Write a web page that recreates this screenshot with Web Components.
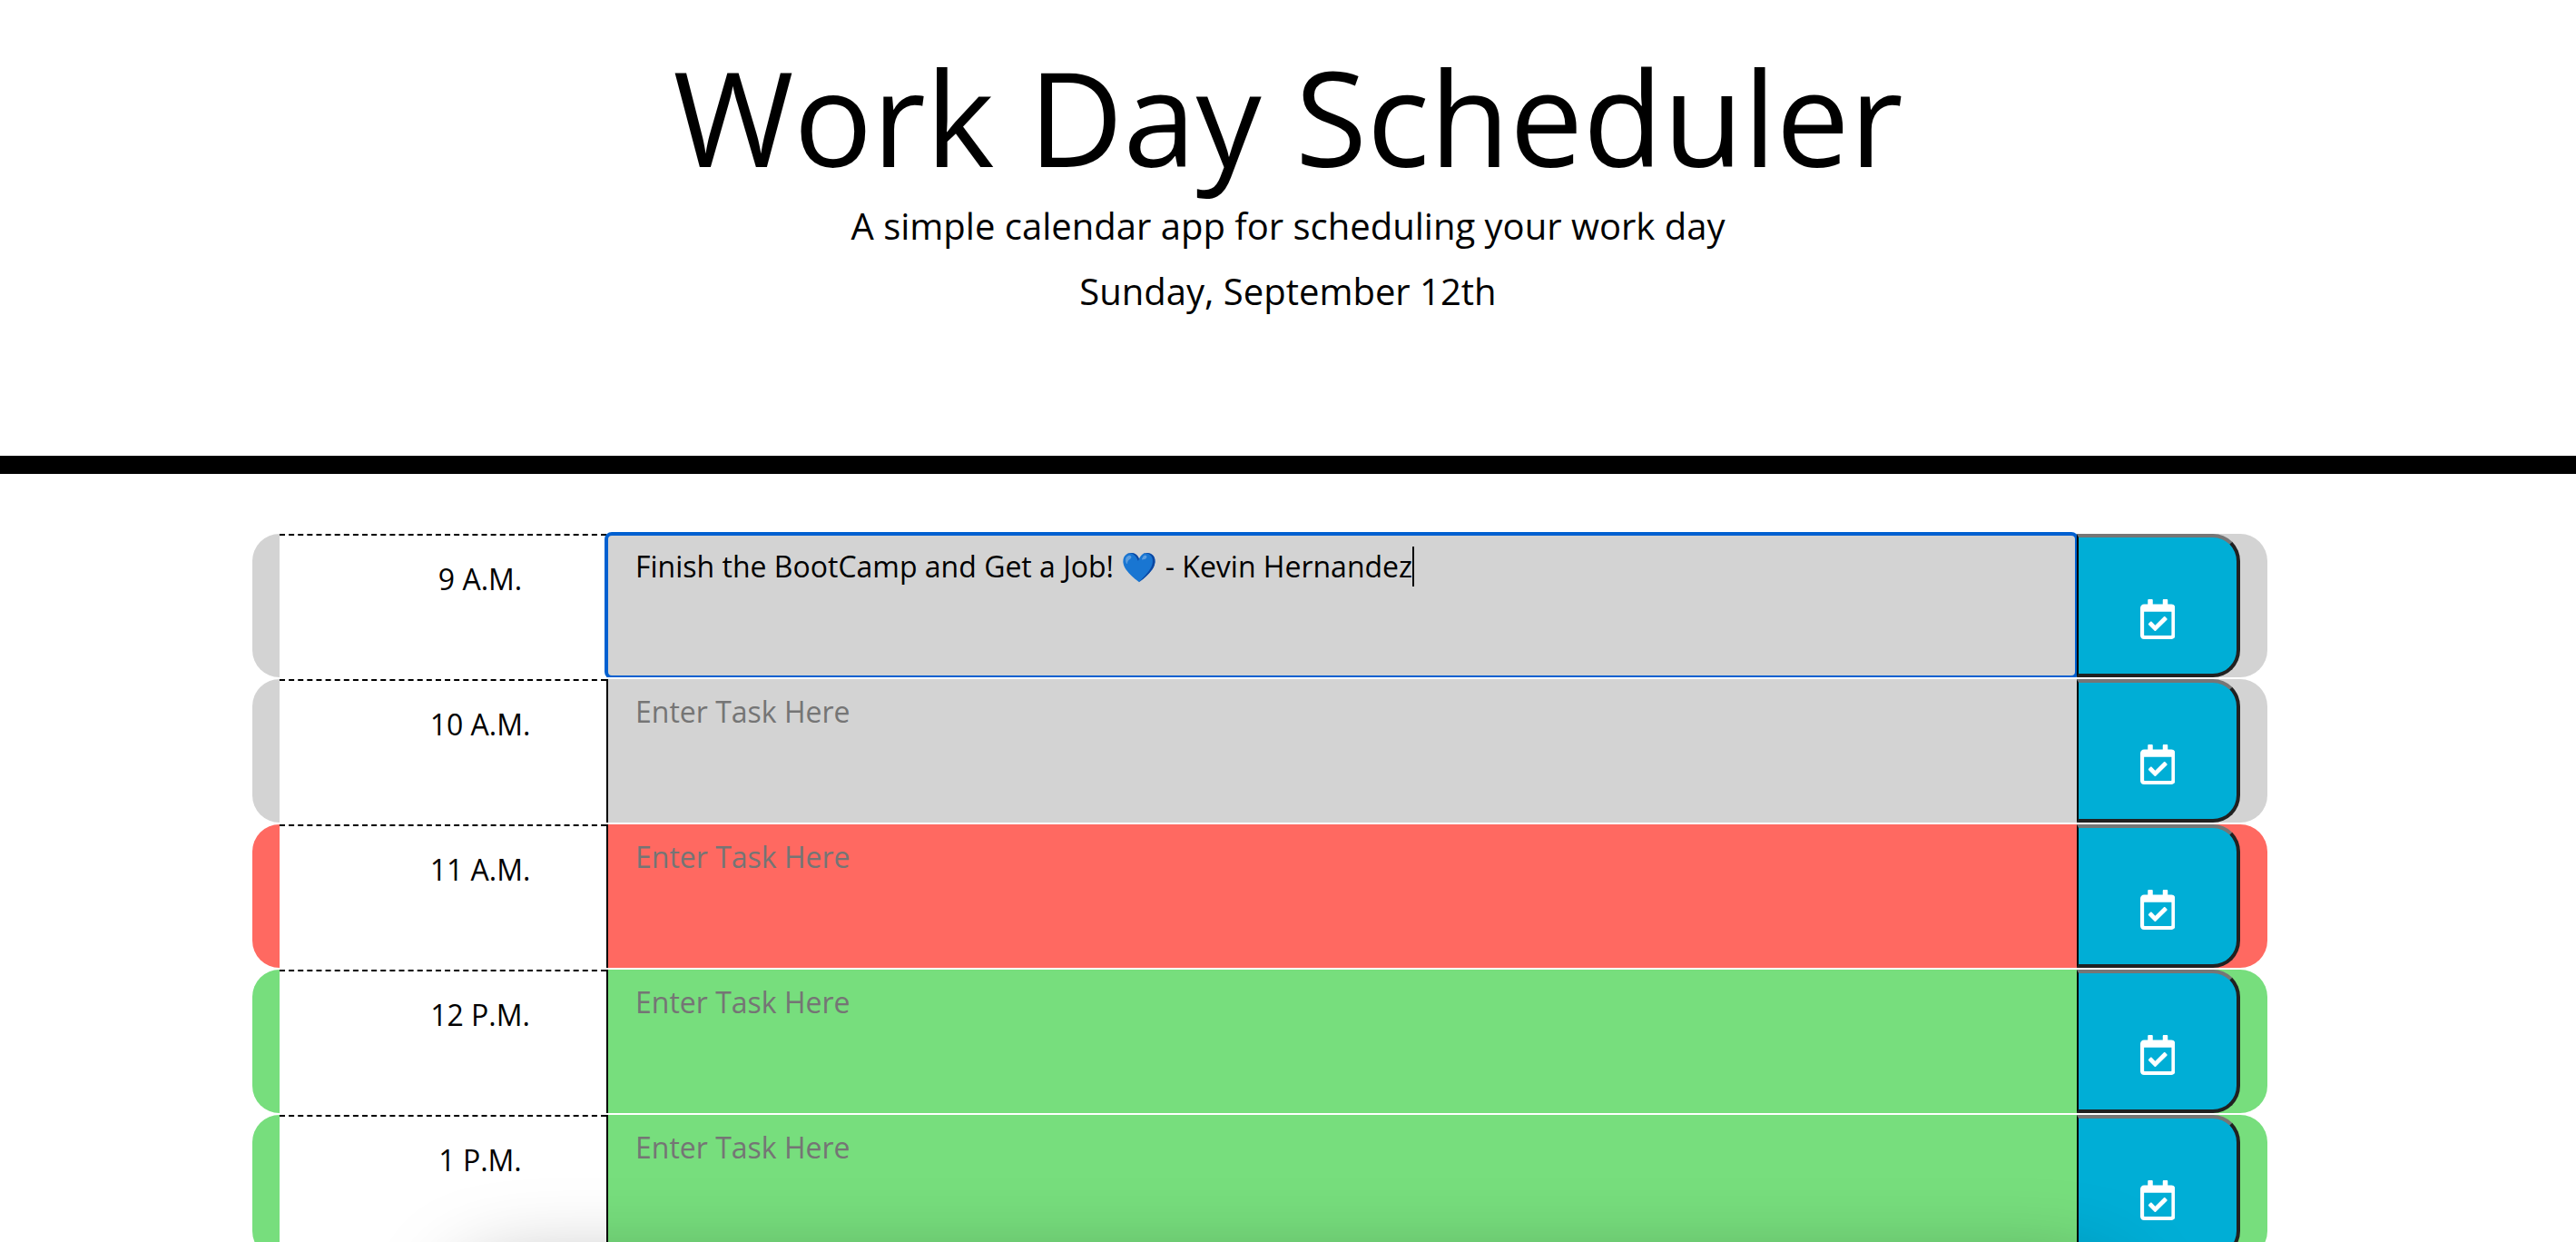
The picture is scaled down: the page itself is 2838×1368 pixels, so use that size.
<!DOCTYPE html>
<html lang="en">
<head>
<meta charset="utf-8">
<title>Work Day Scheduler</title>
<style>
  html, body { height: 100%; margin: 0; overflow: hidden; }
  body { background: #fff; color: #000; font: 32px/48px "Open Sans", sans-serif; }
</style>
</head>
<body>
<day-scheduler>
  <scheduler-header slot="header">
    <span slot="title">Work Day Scheduler</span>
    <span slot="lead">A simple calendar app for scheduling your work day</span>
    <span slot="date">Sunday, September 12th</span>
  </scheduler-header>
  <time-block state="past" editing value="Finish the BootCamp and Get a Job! 💙 - Kevin Hernandez">9 A.M.</time-block>
  <time-block state="past">10 A.M.</time-block>
  <time-block state="present">11 A.M.</time-block>
  <time-block state="future">12 P.M.</time-block>
  <time-block state="future">1 P.M.</time-block>
</day-scheduler>
<dock-shadow></dock-shadow>

<template id="scheduler-tpl">
  <style>
    :host { display: block; }
    main { box-sizing: border-box; width: 2220px; max-width: 100%; margin: 64px auto 0; }
    /* the list hangs one gutter to the left of the centred column */
    .column { box-sizing: border-box; max-width: 2282px; margin: 0 auto; padding-right: 62px; }
  </style>
  <slot name="header"></slot>
  <div class="column"><main><slot></slot></main></div>
</template>

<template id="header-tpl">
  <style>
    :host { display: block; }
    header { padding: 43px 32px 145px; border-bottom: 20px solid #000; text-align: center; }
    h1 { margin: 0; font-size: 144px; line-height: 170px; font-weight: 400; }
    p { margin: 0; font-size: 40px; line-height: 72px; }
  </style>
  <header>
    <h1><slot name="title"></slot></h1>
    <p><slot name="lead"></slot></p>
    <p><slot name="date"></slot></p>
  </header>
</template>

<template id="block-tpl">
  <style>
    :host { display: block; position: relative; border-top: 2px solid #fff; --tone: #d3d3d3; }
    :host([state="present"]) { --tone: #ff6961; }
    :host([state="future"]) { --tone: #77de7d; }
    .row { display: grid; grid-template-columns: 2fr 9fr 1fr; height: 158px; padding: 0 30px; background: var(--tone); border-radius: 30px; }
    label { box-sizing: border-box; padding: 24px 0 0 82px; border-top: 2px dashed #000; background: #fff; text-align: center; }
    .task { position: relative; display: flex; }
    textarea { box-sizing: border-box; flex: 1; min-width: 0; margin: 0; padding: 12px 30px; border: 0; border-left: 2px solid #000; border-radius: 0; outline: 0; resize: none; overflow: hidden; background: var(--tone); color: #000; font: inherit; }
    textarea::placeholder { color: #757575; opacity: 1; }
    :host([editing]) textarea { outline: 4px solid #0060d0; outline-offset: -2px; border-radius: 6px; border-left-color: transparent; }
    .caret { display: none; position: absolute; top: 14px; left: 888px; width: 2px; height: 44px; background: #000; }
    :host([editing]) .caret { display: block; }
    button { position: relative; display: flex; align-items: center; justify-content: center; margin: 0; padding: 30px 0 0; border: 4px solid; border-color: #767676 #212121 #212121 #000; border-left-width: 2px; border-radius: 0 30px 30px 0; background: #00aed6; color: #fff; }
    svg { display: block; height: 44px; }
  </style>
  <div class="row">
    <label for="task"><slot></slot></label>
    <div class="task"><textarea id="task" placeholder="Enter Task Here" spellcheck="false"></textarea><span class="caret"></span></div>
    <button type="button" aria-label="Save task">
      <svg viewBox="0 0 448 512" fill="currentColor" aria-hidden="true"><path d="M400 64h-48V12c0-6.627-5.373-12-12-12h-40c-6.627 0-12 5.373-12 12v52H160V12c0-6.627-5.373-12-12-12h-40c-6.627 0-12 5.373-12 12v52H48C21.49 64 0 85.490 0 112v352c0 26.510 21.490 48 48 48h352c26.510 0 48-21.490 48-48V112c0-26.510-21.490-48-48-48zm-6 400H54a6 6 0 0 1-6-6V160h352v298a6 6 0 0 1-6 6zm-52.849-200.650L198.842 404.519c-4.705 4.667-12.303 4.637-16.971-.068l-75.091-75.699c-4.667-4.705-4.637-12.303.068-16.971l22.719-22.536c4.705-4.667 12.303-4.637 16.970.069l44.104 44.461 111.072-110.181c4.705-4.667 12.303-4.637 16.971.068l22.536 22.718c4.667 4.705 4.636 12.303-.069 16.970z"/></svg>
    </button>
  </div>
</template>

<template id="dock-tpl">
  <style>
    :host { position: fixed; left: 18%; right: 18%; bottom: -240px; height: 200px; border-radius: 40px; box-shadow: 0 0 100px rgba(0, 0, 0, .4); pointer-events: none; z-index: 2; }
  </style>
</template>

<script>
  class TemplateElement extends HTMLElement {
    constructor() {
      super();
      const tpl = document.getElementById(this.constructor.template);
      this.attachShadow({ mode: "open" }).append(tpl.content.cloneNode(true));
    }
  }
  customElements.define("day-scheduler", class extends TemplateElement { static template = "scheduler-tpl"; });
  customElements.define("scheduler-header", class extends TemplateElement { static template = "header-tpl"; });
  customElements.define("time-block", class extends TemplateElement {
    static template = "block-tpl";
    connectedCallback() {
      this.shadowRoot.querySelector("textarea").value = this.getAttribute("value") || "";
    }
  });
  customElements.define("dock-shadow", class extends TemplateElement { static template = "dock-tpl"; });
</script>
</body>
</html>
